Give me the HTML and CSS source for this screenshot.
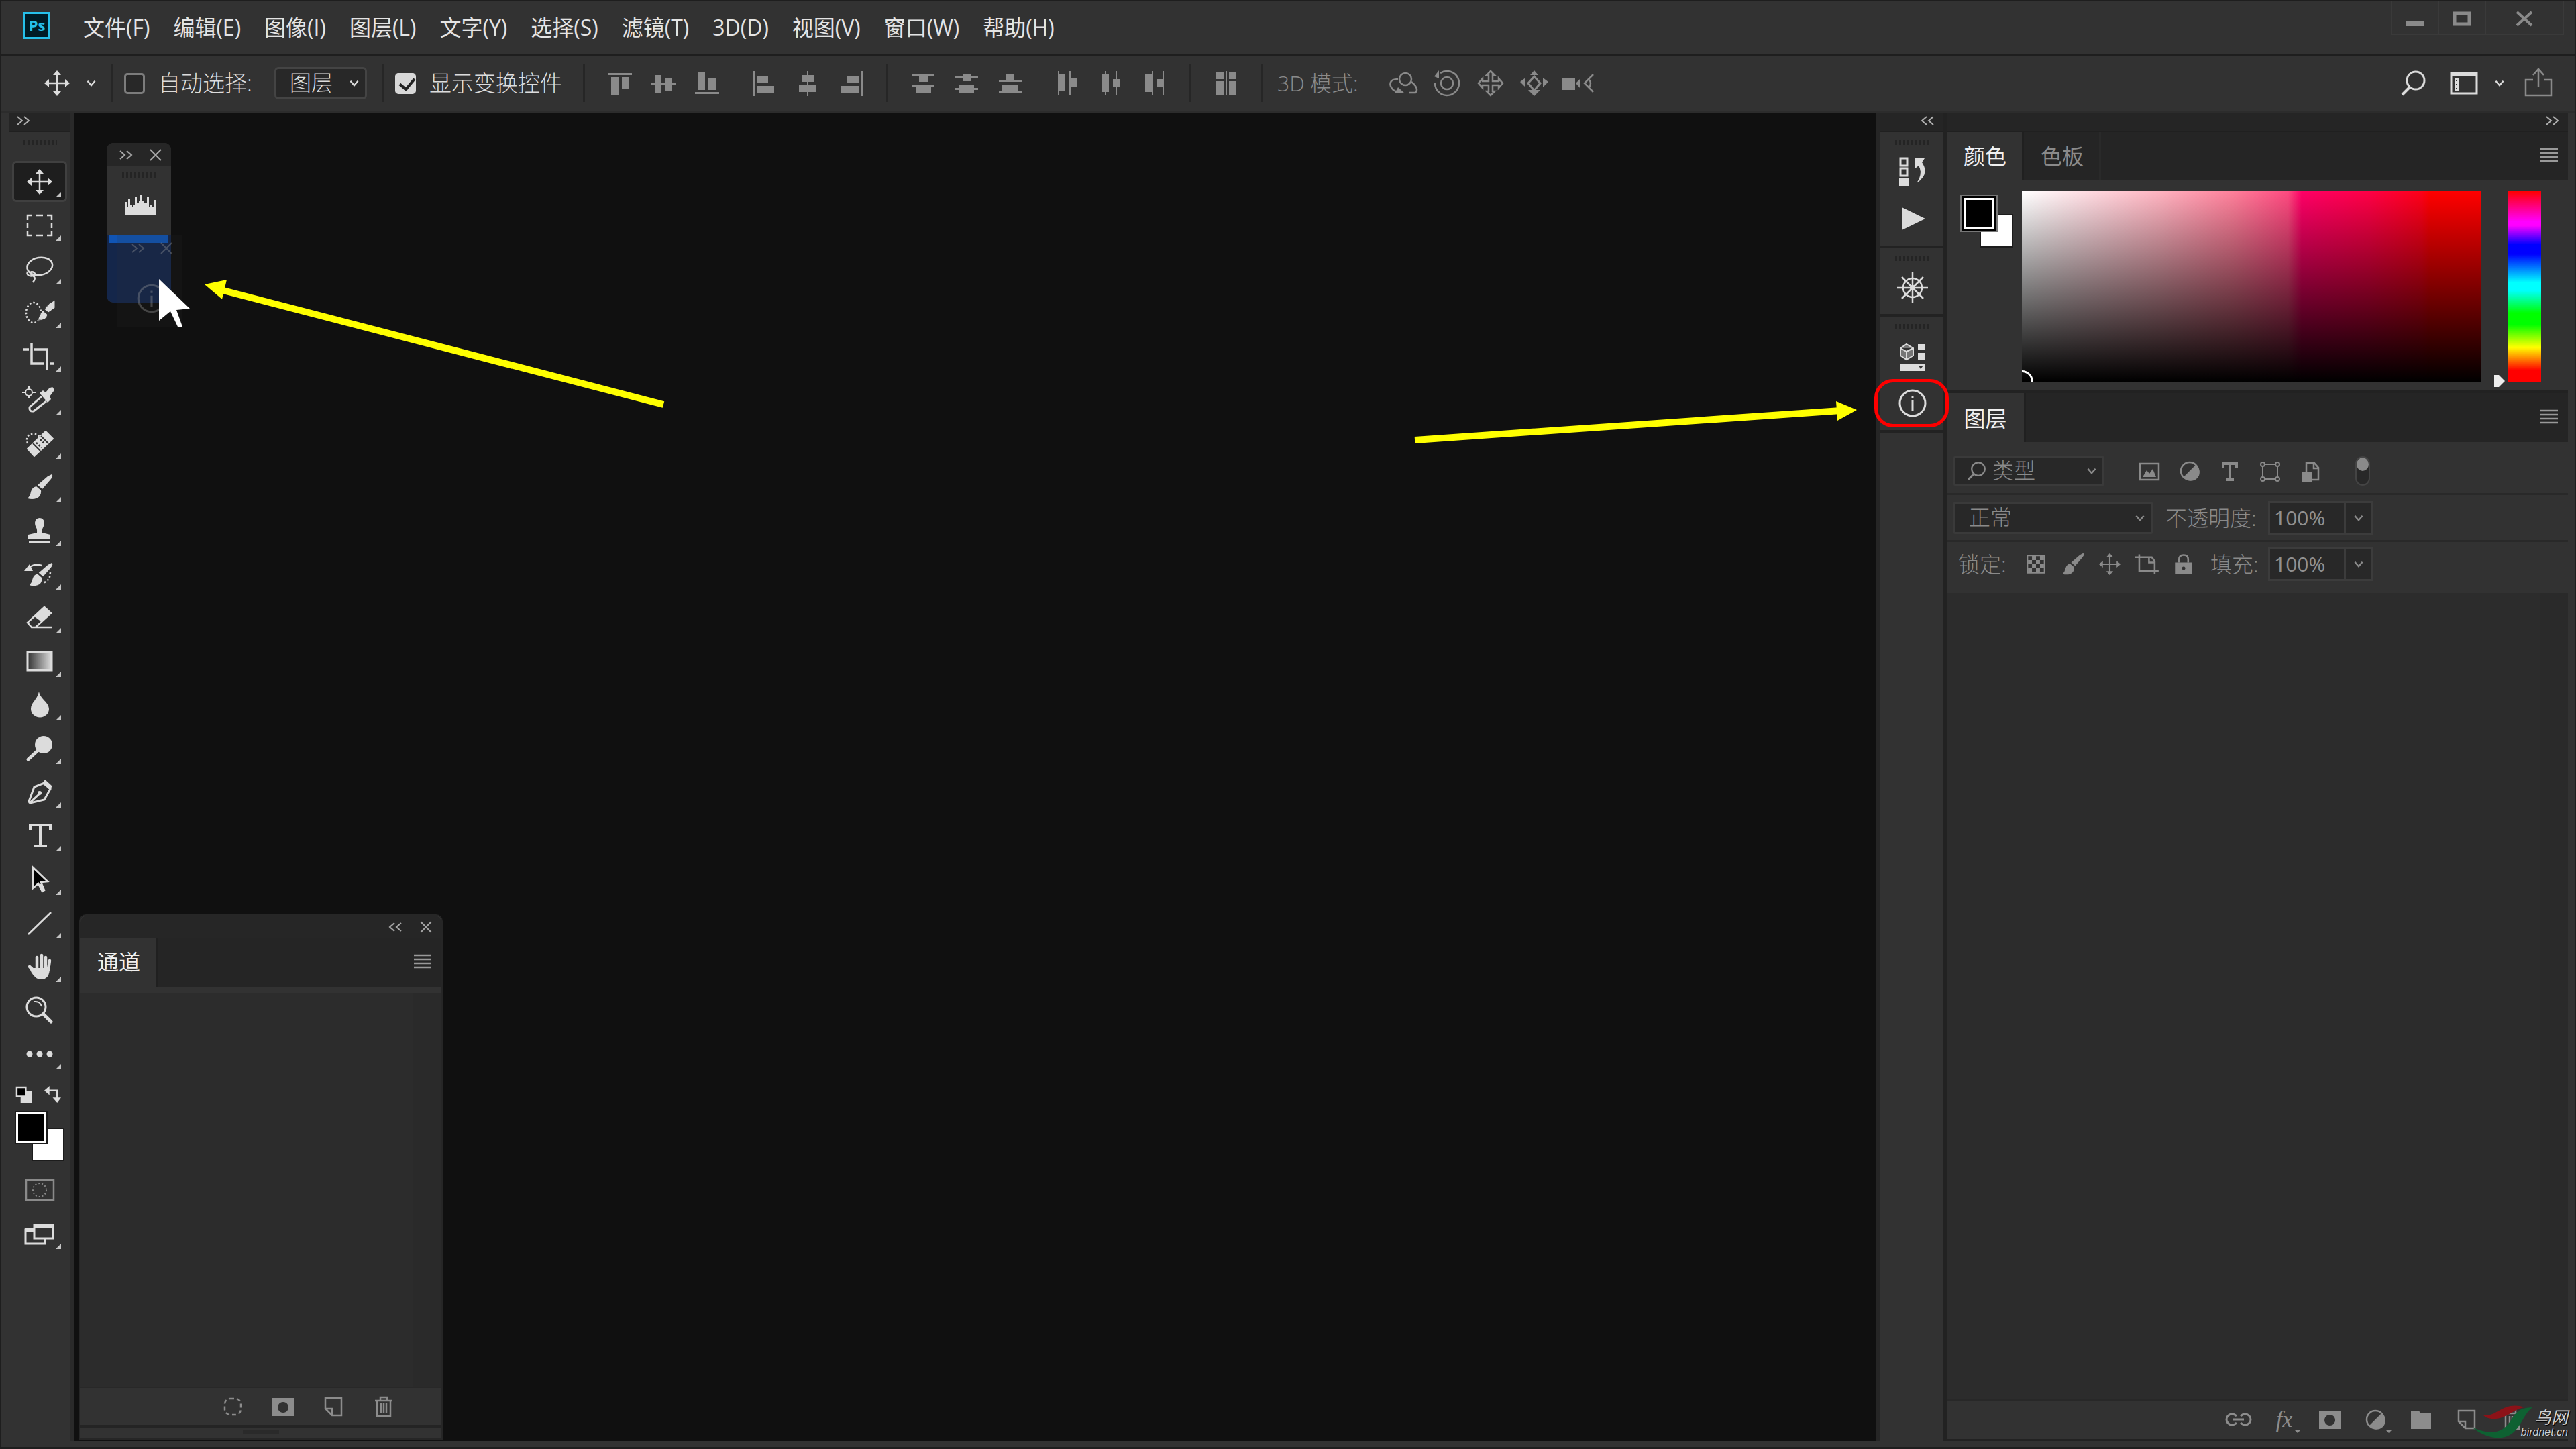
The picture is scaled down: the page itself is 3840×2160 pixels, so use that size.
FILE: index.html
```html
<!DOCTYPE html>
<html lang="zh-CN">
<head>
    <meta charset="UTF-8">
    <meta name="viewport" content="width=device-width, initial-scale=1.0">
    <title>Photoshop</title>
    <link rel="stylesheet" href="styles.css">
</head>
<body>
    <!-- shared icons, all centred on 0,0 -->
    <svg class="defs" aria-hidden="true">
        <defs>
            <linearGradient id="ramp"><stop offset="0" stop-color="#333"/><stop offset="1" stop-color="#ddd"/></linearGradient>
        </defs>
        <symbol id="move" viewBox="-20 -20 40 40"><path d="M-13 0H13M0-13V13" stroke="currentColor" stroke-width="2.5"/><path d="M-19 0l7-6v12zM19 0l-7-6v12zM0-19l-6 7h12zM0 19l-6-7h12z" fill="currentColor"/></symbol>
        <symbol id="chev" viewBox="-20 -20 40 40"><path d="M-7-4L0 4 7-4" fill="none" stroke="currentColor" stroke-width="3"/></symbol>
        <symbol id="right2" viewBox="-20 -20 40 40"><path d="M-9-6l7 6-7 6M1-6l7 6-7 6" fill="none" stroke="currentColor" stroke-width="2"/></symbol>
        <symbol id="left2" viewBox="-20 -20 40 40"><path d="M-2-6l-7 6 7 6M8-6l-7 6 7 6" fill="none" stroke="currentColor" stroke-width="2"/></symbol>
        <symbol id="cross" viewBox="-20 -20 40 40"><path d="M-8-8L8 8M8-8L-8 8" fill="none" stroke="currentColor" stroke-width="2"/></symbol>
        <symbol id="lines" viewBox="-20 -20 40 40"><path d="M-13-9H13M-13-3H13M-13 3H13M-13 9H13" stroke="currentColor" stroke-width="2.5"/></symbol>
        <symbol id="info" viewBox="-24 -24 48 48"><circle r="19" fill="none" stroke="currentColor" stroke-width="3"/><path d="M0-4V12M0-11V-8" stroke="currentColor" stroke-width="3"/></symbol>
        <symbol id="glass" viewBox="-20 -20 40 40"><circle cx="4" cy="-4" r="13" fill="none" stroke="currentColor" stroke-width="3"/><path d="M-5 6L-16 17" stroke="currentColor" stroke-width="4"/></symbol>
        <symbol id="mask" viewBox="-20 -20 40 40"><path d="M-16-13H16V14H-16ZM0-7a8 8 0 1 0 .1 0Z" fill="currentColor" fill-rule="evenodd"/></symbol>
        <symbol id="adjust" viewBox="-20 -20 40 40"><circle r="13" fill="none" stroke="currentColor" stroke-width="2.5"/><path d="M9-9A13 13 0 1 1-9 9Z" fill="currentColor"/></symbol>
        <symbol id="newdoc" viewBox="-20 -20 40 40"><path d="M-12-13H12V13H-2L-12 3ZM-12 3H-2V13" fill="none" stroke="currentColor" stroke-width="2.5"/></symbol>
        <symbol id="trash" viewBox="-20 -20 40 40"><path d="M-13-9H13M-5-10V-14H5V-10M-10-8V14H10V-8M-4-5V10M0-5V10M4-5V10" fill="none" stroke="currentColor" stroke-width="2.5"/></symbol>
        <symbol id="brush" viewBox="-20 -20 40 40"><path d="M18-19Q21-17 17-12L4 3-3-3 12-16ZM-5-1L2 5Q3 14-5 17-11 19-18 17-14 13-13 7-11 0-5-1Z" fill="currentColor"/></symbol>
    </svg>

    <div class="app">
        <header class="titlebar">
            <span class="logo">Ps</span>
            <nav class="menu">
                <a href="#">文件(F)</a>
                <a href="#">编辑(E)</a>
                <a href="#">图像(I)</a>
                <a href="#">图层(L)</a>
                <a href="#">文字(Y)</a>
                <a href="#">选择(S)</a>
                <a href="#">滤镜(T)</a>
                <a href="#">3D(D)</a>
                <a href="#">视图(V)</a>
                <a href="#">窗口(W)</a>
                <a href="#">帮助(H)</a>
            </nav>
            <div class="window-buttons">
                <button aria-label="最小化"><svg viewBox="-20 -20 40 40"><path d="M-13 6H13V13H-13Z" fill="currentColor"/></svg></button>
                <button aria-label="最大化"><svg viewBox="-20 -20 40 40"><path d="M-11-6H11V10H-11Z" fill="none" stroke="currentColor" stroke-width="5"/></svg></button>
                <button class="close" aria-label="关闭"><svg viewBox="-20 -20 40 40"><path d="M-11-8L11 12M11-8L-11 12" stroke="currentColor" stroke-width="4"/></svg></button>
            </div>
        </header>

        <div class="options">
            <button class="current" aria-label="移动工具"><svg><use href="#move"/></svg><svg class="small"><use href="#chev"/></svg></button>
            <span class="sep"></span>
            <label class="check"><input type="checkbox">自动选择:</label>
            <div class="select mode">
                <select aria-label="自动选择"><option>图层</option></select>
                <svg><use href="#chev"/></svg>
            </div>
            <span class="sep"></span>
            <label class="check"><input type="checkbox" checked>显示变换控件</label>
            <span class="sep"></span>
            <div class="group">
                <button aria-label="顶对齐"><svg viewBox="-20 -20 40 40"><path d="M-18-15H18V-12H-18ZM-13-9H-2V17H-13ZM3-9H13V8H3Z"/></svg></button>
                <button aria-label="垂直居中对齐"><svg viewBox="-20 -20 40 40"><path d="M-18 0H18V3H-18ZM-13-12H-3V15H-13ZM3-8H13V11H3Z"/></svg></button>
                <button aria-label="底对齐"><svg viewBox="-20 -20 40 40"><path d="M-18 13H18V16H-18ZM-13-16H-3V10H-13ZM2-7H13V10H2Z"/></svg></button>
            </div>
            <div class="group">
                <button aria-label="左对齐"><svg viewBox="-20 -20 40 40"><path d="M-17-18H-14V19H-17ZM-11-11H6V-1H-11ZM-11 4H15V15H-11Z"/></svg></button>
                <button aria-label="水平居中对齐"><svg viewBox="-20 -20 40 40"><path d="M-1-18H1V19H-1ZM-9-12H9V-2H-9ZM-13 3H13V13H-13Z"/></svg></button>
                <button aria-label="右对齐"><svg viewBox="-20 -20 40 40"><path d="M14-18H17V19H14ZM-6-11H11V-1H-6ZM-15 4H11V15H-15Z"/></svg></button>
            </div>
            <span class="sep"></span>
            <div class="group">
                <button aria-label="按顶分布"><svg viewBox="-20 -20 40 40"><path d="M-17-14H17V-11H-17ZM-6-11H7V-2H-6ZM-17 3H17V6H-17ZM-11 6H12V15H-11Z"/></svg></button>
                <button aria-label="垂直居中分布"><svg viewBox="-20 -20 40 40"><path d="M-17-10H17V-7H-17ZM-6-14H6V-3H-6ZM-17 7H17V10H-17ZM-11 3H11V14H-11Z"/></svg></button>
                <button aria-label="按底分布"><svg viewBox="-20 -20 40 40"><path d="M-17-5H17V-2H-17ZM-6-14H6V-5H-6ZM-17 12H17V15H-17ZM-12 3H11V12H-12Z"/></svg></button>
            </div>
            <div class="group">
                <button aria-label="按左分布"><svg viewBox="-20 -20 40 40"><path d="M-14-18H-12V18H-14ZM-12-13H-3V11H-12ZM3-18H5V18H3ZM5-8H14V6H5Z"/></svg></button>
                <button aria-label="水平居中分布"><svg viewBox="-20 -20 40 40"><path d="M-9-18H-7V18H-9ZM-13-13H-3V13H-13ZM7-18H9V18H7ZM3-6H13V6H3Z"/></svg></button>
                <button aria-label="按右分布"><svg viewBox="-20 -20 40 40"><path d="M-4-18H-2V18H-4ZM-14-13H-4V13H-14ZM12-18H14V18H12ZM3-6H12V6H3Z"/></svg></button>
            </div>
            <span class="sep"></span>
            <div class="group">
                <button aria-label="自动对齐图层"><svg viewBox="-20 -20 40 40"><path d="M-15-17H-4V-6H-15ZM-15-3H-4V18H-15ZM-1-18H1V18H-1ZM4-17H15V-6H4ZM4-3H15V18H4Z"/></svg></button>
            </div>
            <span class="sep"></span>
            <span class="dim">3D 模式:</span>
            <div class="group">
                <button aria-label="旋转"><svg viewBox="-20 -20 40 40"><g fill="none" stroke="currentColor" stroke-width="2.5"><circle cx="3" cy="-6" r="9"/><path d="M-8-6C-22-6-22 3-15 10L-8 14M12-2Q24 8 18 14H8"/></g><path d="M-8 6L2 15H-13Z"/></svg></button>
                <button aria-label="滚动"><svg viewBox="-20 -20 40 40"><g fill="none" stroke="currentColor" stroke-width="2.5"><circle r="9"/><path d="M-10-15A18 18 0 1 1-18 0"/></g><path d="M-12-19V-7L-19-10Z"/></svg></button>
                <button aria-label="拖动"><svg viewBox="-20 -20 40 40"><path d="M0-18L6-12H3V-3H12V-7L18 0 12 7V3H3V12H6L0 18-6 12H-3V3H-12V7L-18 0-12-7V-3H-3V-12H-6Z" fill="none" stroke="currentColor" stroke-width="2.5"/></svg></button>
                <button aria-label="滑动"><svg viewBox="-20 -20 40 40"><path d="M0-10L9 0 0 11-9 0Z" fill="none" stroke="currentColor" stroke-width="3"/><path d="M0-19L6-12H-6ZM-21-2L-13-8V6ZM21-2L13-8V6ZM-9 10H9L0 19Z"/></svg></button>
                <button aria-label="缩放"><svg viewBox="-20 -20 40 40"><path d="M-23-8H-4V10H-23ZM-3 0L4-7V8Z"/><path d="M23-13L10 0 23 13M17-5Q21 0 17 6" fill="none" stroke="currentColor" stroke-width="2.5"/></svg></button>
            </div>
            <div class="options-right">
                <button aria-label="搜索"><svg><use href="#glass"/></svg></button>
                <button class="workspace-btn" aria-label="工作区"><svg viewBox="-20 -20 40 40"><path d="M-19-15H19V15H-19Z" fill="none" stroke="currentColor" stroke-width="3"/><path d="M-19-16H19V-10H-19Z"/><path d="M-13-6H-9V-2H-13ZM-13 0H-9V4H-13ZM-13 6H-9V10H-13Z" fill="none" stroke="currentColor" stroke-width="2"/></svg><svg class="small"><use href="#chev"/></svg></button>
                <button class="dim" aria-label="共享"><svg viewBox="-20 -20 40 40"><path d="M-8-5H-19V18H19V-5H8M0 6V-20M-8-12L0-21 8-12" fill="none" stroke="currentColor" stroke-width="2.5"/></svg></button>
            </div>
        </div>

        <main class="workspace">
            <aside class="tools">
                <div class="dock-head"><svg><use href="#right2"/></svg></div>
                <div class="grip"></div>
                <button class="tool active" aria-label="移动"><svg><use href="#move"/></svg></button>
                <button class="tool" aria-label="矩形选框"><svg viewBox="-20 -20 40 40"><path d="M-18-8V-15H-11M-5-15H5M11-15H18V-8M18-4V4M18 8V15H11M5 15H-5M-11 15H-18V8M-18 4V-4" fill="none" stroke="currentColor" stroke-width="2.5"/></svg></button>
                <button class="tool" aria-label="套索"><svg viewBox="-20 -20 40 40"><g fill="none" stroke="currentColor" stroke-width="2.5"><ellipse cx="1" cy="-4" rx="19" ry="13" transform="rotate(-10)"/><path d="M-18 4C-21 12-8 12-7 7-9 3-17 3-12 9-5 12-7 16-10 20"/></g></svg></button>
                <button class="tool" aria-label="快速选择"><svg viewBox="-20 -20 40 40"><ellipse cx="-9" cy="0" rx="11" ry="15" fill="none" stroke="currentColor" stroke-width="2.5" stroke-dasharray="2.5 3"/><path d="M23-19V-7L13 0 7-5Q14-15 23-19ZM5-3L12 3Q10 13-3 11 2-1 5-3Z" stroke="#323232"/></svg></button>
                <button class="tool" aria-label="裁剪"><svg viewBox="-20 -20 40 40"><path d="M-24-10H-16M-12-19V11H6M-8-10H11V20M15 11H22" fill="none" stroke="currentColor" stroke-width="3.5"/></svg></button>
                <button class="tool" aria-label="吸管"><svg viewBox="-20 -20 40 40"><path d="M-16-20V-15M-16-7V-2M-26-11H-20M-12-11H-6" stroke="currentColor" stroke-width="2"/><circle cx="-16" cy="-11" r="5" fill="none" stroke="currentColor" stroke-width="2"/><path d="M3-5L-15 11Q-16 18-9 17L10 2" fill="none" stroke="currentColor" stroke-width="3"/><path d="M0-10L5-14 9-11 14-17Q22-22 21-13L15-5 17-1 12 4Z"/></svg></button>
                <button class="tool" aria-label="修复画笔"><svg viewBox="-20 -20 40 40"><path d="M-18 0Q-22-14-9-14-2-14 0-9" fill="none" stroke="currentColor" stroke-width="2.5" stroke-dasharray="2.5 3"/><path d="M9-18L20-7-8 19-18 8Z" stroke="currentColor" stroke-width="2" stroke-linejoin="round"/><path d="M2-11L13 0M-10 0L1 11" stroke="#323232" stroke-width="2"/><path d="M1-6L8 1M-5-1L3 6" stroke="#323232" stroke-width="2.5" stroke-dasharray="2.5 2.5"/></svg></button>
                <button class="tool" aria-label="画笔"><svg><use href="#brush"/></svg></button>
                <button class="tool" aria-label="仿制图章"><svg viewBox="-20 -20 40 40"><path d="M-7-12A7 7 0 1 1 7-12C7-5 3-5 4 3L16 6V12H-17V6L-4 3C-3-5-7-5-7-12ZM-16 15H16V18H-16Z"/></svg></button>
                <button class="tool" aria-label="历史记录画笔"><svg viewBox="-20 -20 40 40"><use href="#brush" x="-17" y="-18" width="37" height="37"/><path d="M-17-9Q-8-17 3-13" fill="none" stroke="currentColor" stroke-width="2.5"/><path d="M-15-15L-23-5H-10Z"/><path d="M16-3L15 4 12 9 6 13" fill="none" stroke="currentColor" stroke-width="2.5" stroke-dasharray="2.5 3"/></svg></button>
                <button class="tool" aria-label="橡皮擦"><svg viewBox="-20 -20 40 40"><path d="M7-16L17-7-6 14H-12L-18 7ZM-8 14H19" fill="none" stroke="currentColor" stroke-width="2.5"/><path d="M7-16L17-7 3 6-8-2Z"/></svg></button>
                <button class="tool" aria-label="渐变"><svg viewBox="-20 -20 40 40"><path d="M-18-14H18V13H-18Z" fill="url(#ramp)" stroke="currentColor" stroke-width="3"/></svg></button>
                <button class="tool" aria-label="模糊"><svg viewBox="-20 -20 40 40"><path d="M-1-20C1-9 14-4 14 6A13 12 0 0 1-13 6C-13-4-4-7-1-20Z"/></svg></button>
                <button class="tool" aria-label="减淡"><svg viewBox="-20 -20 40 40"><circle cx="6" cy="-6" r="13"/><path d="M-3 3L-17 16" stroke="currentColor" stroke-width="5" stroke-linecap="round"/></svg></button>
                <button class="tool" aria-label="钢笔"><svg viewBox="-20 -20 40 40"><path d="M7-14L16-5 7 11-14 16Q-17 15-15 11L-8-8ZM-14 15L0 2" fill="none" stroke="currentColor" stroke-width="3"/><circle cx="0" cy="1" r="3"/><path d="M8-19L19-9 15-4 4-13Z"/></svg></button>
                <button class="tool" aria-label="文字"><svg viewBox="-20 -20 40 40"><path d="M-14-8V-16H16V-8M1-16V16M-9 15H11" fill="none" stroke="currentColor" stroke-width="4"/></svg></button>
                <button class="tool" aria-label="路径选择"><svg viewBox="-20 -20 40 40"><path d="M-10-18L12 3 2 4 7 16 4 18-2 6-10 13Z" fill="#000" stroke="currentColor" stroke-width="2.5"/><path d="M1 7L6 17" stroke="currentColor" stroke-width="4"/></svg></button>
                <button class="tool" aria-label="直线"><svg viewBox="-20 -20 40 40"><path d="M-17 17L17-16" stroke="currentColor" stroke-width="2.5"/></svg></button>
                <button class="tool" aria-label="抓手"><svg viewBox="-20 -20 40 40"><path d="M-15 0L0 14M-4-14V4M3-17V4M9-14V4M15-9L13 5" stroke="currentColor" stroke-width="4.5" stroke-linecap="round"/><path d="M-8 2H15Q15 19 2 19-6 19-12 9L-15 3Z"/></svg></button>
                <button class="tool plain" aria-label="缩放"><svg viewBox="-20 -20 40 40"><circle cx="-5" cy="-5" r="14" fill="none" stroke="currentColor" stroke-width="3"/><path d="M6 6L17 17" stroke="currentColor" stroke-width="5" stroke-linecap="round"/><path d="M-8-13Q1-14 3-6" fill="none" stroke="currentColor" stroke-width="2"/></svg></button>
                <button class="tool" aria-label="编辑工具栏"><svg viewBox="-20 -20 40 40"><circle cx="-15" r="4.5"/><circle r="4.5"/><circle cx="15" r="4.5"/></svg></button>
                <div class="swatch-actions">
                    <button aria-label="默认颜色"><svg viewBox="0 0 26 26"><path d="M8 8H26V26H8Z"/><path d="M2 2H16V16H2Z" fill="#000" stroke="currentColor" stroke-width="2.5"/></svg></button>
                    <button aria-label="切换颜色"><svg viewBox="0 0 26 26"><path d="M6 7H20V20" fill="none" stroke="currentColor" stroke-width="2.5"/><path d="M0 7L8 0V14ZM20 26L13 18H26Z"/></svg></button>
                </div>
                <div class="swatches"><span class="bg"></span><span class="fg"></span></div>
                <button class="tool plain" aria-label="快速蒙版"><svg class="dim" viewBox="-20 -20 40 40"><path d="M-20-15H21V15H-20Z" fill="none" stroke="currentColor" stroke-width="2.5"/><circle r="10" fill="none" stroke="currentColor" stroke-width="2" stroke-dasharray="2 3"/></svg></button>
                <button class="tool" aria-label="屏幕模式"><svg viewBox="-20 -20 40 40"><path d="M-9-6H-21V15H8V8M-8-13H20V7H-8Z" fill="none" stroke="currentColor" stroke-width="3"/><path d="M-9-15H21V-9H-9ZM-21-8H-9V-3H-21Z"/></svg></button>
            </aside>

            <section class="canvas">
                <svg class="arrow arrow-left" viewBox="0 0 700 200"><path d="M20 16L684 188" stroke="#ff0" stroke-width="10"/><path d="M0 9L33 2 26 31Z" fill="#ff0"/></svg>
                <svg class="arrow arrow-right" viewBox="0 0 660 70"><path d="M0 58L635 14" stroke="#ff0" stroke-width="10"/><path d="M659 13L628 0 630 29Z" fill="#ff0"/></svg>

                <div class="float">
                    <div class="float-head"><svg><use href="#right2"/></svg><svg><use href="#cross"/></svg></div>
                    <div class="grip"></div>
                    <button class="histogram" aria-label="直方图"><svg viewBox="0 0 46 30"><path d="M0 30V11H3V18H5V6H8V16H11V18H13V15H15V3H18V13H21V9H23V0H26V9H28V13H31V12H33V3H36V18H38V15H40V18H43V8H46V30Z"/></svg></button>
                    <div class="drop"></div>
                    <div class="ghost">
                        <div class="ghost-head"><svg><use href="#right2"/></svg><svg><use href="#cross"/></svg></div>
                        <svg class="ghost-info"><use href="#info"/></svg>
                    </div>
                    <svg class="cursor" viewBox="0 0 46 72"><path d="M0 0L46 44 26 46 35 71H28L17 48 0 62Z" fill="#fff"/></svg>
                </div>

                <section class="channels">
                    <div class="float-head"><svg><use href="#left2"/></svg><svg><use href="#cross"/></svg></div>
                    <div class="tabs"><button class="tab on">通道</button><svg class="panel-menu"><use href="#lines"/></svg></div>
                    <div class="list"></div>
                    <div class="foot">
                        <button aria-label="载入选区"><svg viewBox="-20 -20 40 40"><rect x="-12" y="-12" width="24" height="24" rx="8" fill="none" stroke="currentColor" stroke-width="2.5" stroke-dasharray="6 4"/></svg></button>
                        <button aria-label="存储蒙版"><svg><use href="#mask"/></svg></button>
                        <button aria-label="新建通道"><svg><use href="#newdoc"/></svg></button>
                        <button aria-label="删除"><svg><use href="#trash"/></svg></button>
                    </div>
                    <div class="resize"></div>
                </section>
            </section>

            <aside class="dock">
                <div class="dock-head end"><svg><use href="#left2"/></svg></div>
                <div class="dock-group tall">
                    <div class="grip"></div>
                    <button aria-label="历史记录"><svg viewBox="-24 -24 48 48"><path d="M-18-20H-8V-9H-18ZM-18-5H-8V6H-18Z" fill="none" stroke="currentColor" stroke-width="3"/><path d="M-20 9H-6V22H-20ZM3-20H18L14-14Q26 4 6 17 16 2 9-9L4-5Z"/></svg></button>
                    <button aria-label="动作"><svg viewBox="-24 -24 48 48"><path d="M-16-17L19 0-16 17Z"/></svg></button>
                </div>
                <div class="dock-group">
                    <div class="grip"></div>
                    <button aria-label="导航器"><svg viewBox="-24 -24 48 48"><g fill="none" stroke="currentColor" stroke-width="2.5"><circle r="14"/><path d="M0-23V23M-23 0H23M-16-16L16 16M16-16L-16 16"/></g><circle r="4"/></svg></button>
                </div>
                <div class="dock-group tall">
                    <div class="grip"></div>
                    <button aria-label="属性"><svg viewBox="-24 -24 48 48"><path d="M-9-18L1-12V-1L-9 5-18-1V-12ZM-18-12L-9-7 1-12M-9-7V5" fill="#777" stroke="currentColor" stroke-width="2"/><path d="M8-18H18V-9H8ZM8-5H18V5H8ZM-19 12H19V22H-19Z"/><path d="M9 14H16L12 19Z" fill="#333"/></svg></button>
                    <button class="marked" aria-label="信息"><svg><use href="#info"/></svg></button>
                </div>
            </aside>

            <aside class="panels">
                <div class="dock-head end"><svg><use href="#right2"/></svg></div>
                <div class="tabs"><button class="tab on">颜色</button><button class="tab">色板</button><svg class="panel-menu"><use href="#lines"/></svg></div>
                <div class="color">
                    <div class="color-swatches"><span class="bg"></span><span class="fg"></span></div>
                    <div class="field"><span class="picker"></span></div>
                    <svg class="hue-arrow" viewBox="0 0 18 20"><path d="M1 1H8L17 10 8 19H1Z" fill="#eee"/></svg>
                    <div class="hue"></div>
                </div>
                <div class="tabs layers-tabs"><button class="tab on">图层</button><svg class="panel-menu"><use href="#lines"/></svg></div>
                <div class="row filter">
                    <div class="select kind">
                        <svg class="lead"><use href="#glass"/></svg>
                        <select aria-label="类型"><option>类型</option></select>
                        <svg><use href="#chev"/></svg>
                    </div>
                    <div class="filters">
                        <button aria-label="像素图层"><svg viewBox="-20 -20 40 40"><path d="M-14-11H14V13H-14Z" fill="none" stroke="currentColor" stroke-width="2.5"/><path d="M-10 9L-4-1 0 4 5-3 10 9Z"/></svg></button>
                        <button aria-label="调整图层"><svg><use href="#adjust"/></svg></button>
                        <button aria-label="文字图层"><svg viewBox="-20 -20 40 40"><path d="M-10-5V-11H10V-5M0-12V13M-6 13H6" fill="none" stroke="currentColor" stroke-width="4"/></svg></button>
                        <button aria-label="形状图层"><svg viewBox="-20 -20 40 40"><path d="M-11-10H11V12H-11Z" fill="none" stroke="currentColor" stroke-width="2"/><g fill="#323232" stroke="currentColor" stroke-width="2"><circle cx="-11" cy="-10" r="3"/><circle cx="11" cy="-10" r="3"/><circle cx="-11" cy="12" r="3"/><circle cx="11" cy="12" r="3"/></g></svg></button>
                        <button aria-label="智能对象"><svg viewBox="-20 -20 40 40"><path d="M-6 1V-12H6L12-5V13H3M5-12V-4H12" fill="none" stroke="currentColor" stroke-width="2.5"/><path d="M-13 2H2V16H-13Z"/></svg></button>
                    </div>
                    <button class="toggle" aria-label="过滤开关"></button>
                </div>
                <div class="row blend">
                    <div class="select blend-mode">
                        <select aria-label="混合模式"><option>正常</option></select>
                        <svg><use href="#chev"/></svg>
                    </div>
                    <label for="opacity">不透明度:</label>
                    <div class="value"><input id="opacity" type="text" value="100%"><button aria-label="不透明度滑块"><svg><use href="#chev"/></svg></button></div>
                </div>
                <div class="row lock">
                    <span>锁定:</span>
                    <div class="locks">
                        <button aria-label="锁定透明像素"><svg viewBox="-20 -20 40 40"><path d="M-15-15H15V15H-15Z" fill="none" stroke="currentColor" stroke-width="2.5"/><path d="M-7-15H0V-7H-7ZM7-15H14V-7H7ZM-14-7H-7V0H-14ZM0-7H7V0H0ZM-7 0H0V7H-7ZM7 0H14V7H7ZM-14 7H-7V15H-14ZM0 7H7V15H0Z"/></svg></button>
                        <button aria-label="锁定图像像素"><svg><use href="#brush"/></svg></button>
                        <button aria-label="锁定位置"><svg><use href="#move"/></svg></button>
                        <button aria-label="防止自动嵌套"><svg viewBox="-20 -20 40 40"><path d="M-21-12H9L14-5V17M-13-17V12H21M4-12V-3H14" fill="none" stroke="currentColor" stroke-width="3"/></svg></button>
                        <button aria-label="锁定全部"><svg viewBox="-20 -20 40 40"><path d="M-8-3V-8Q-8-16 0-16T8-8V-3" fill="none" stroke="currentColor" stroke-width="3"/><path d="M-15-3H15V17H-15ZM0 4a3 3 0 1 0 .1 0Z" fill-rule="evenodd"/></svg></button>
                    </div>
                    <label for="fill">填充:</label>
                    <div class="value"><input id="fill" type="text" value="100%"><button aria-label="填充滑块"><svg><use href="#chev"/></svg></button></div>
                </div>
                <div class="list"></div>
                <div class="foot">
                    <button aria-label="链接图层"><svg viewBox="-20 -20 40 40"><path d="M-3-5Q-6-8-10-8A8 8 0 0 0-10 8Q-6 8-3 5M3-5Q6-8 10-8A8 8 0 0 1 10 8Q6 8 3 5M-8 0H8" fill="none" stroke="currentColor" stroke-width="3"/></svg></button>
                    <button class="fx" aria-label="图层样式">fx</button>
                    <button aria-label="图层蒙版"><svg><use href="#mask"/></svg></button>
                    <button class="more" aria-label="调整图层"><svg><use href="#adjust"/></svg></button>
                    <button aria-label="新建组"><svg viewBox="-20 -20 40 40"><path d="M-15-13H-3L-1-9H15V14H-15Z"/></svg></button>
                    <button aria-label="新建图层"><svg><use href="#newdoc"/></svg></button>
                    <button aria-label="删除图层"><svg><use href="#trash"/></svg></button>
                </div>
                <div class="watermark">
                    <svg viewBox="0 0 92 52"><path d="M15 16C35 22 45-6 78 5 62 6 50 24 28 22 21 21 18 19 15 16Z" fill="#8c1218"/><path d="M0 35C25 45 43 46 57 24 66 9 73 6 89 5 78 13 73 30 63 40 46 58 18 50 0 35Z" fill="#0e6132"/></svg>
                    <div class="watermark-text"><span class="cn">鸟网</span><span class="url">birdnet.cn</span></div>
                </div>
            </aside>
        </main>
    </div>
</body>
</html>
```

FILE: styles.css
```css
* {
    box-sizing: border-box;
}

body {
    margin: 0;
    background: #101010;
    color: #dcdcdc;
    font-family: "Open Sans", "Noto Sans CJK SC", sans-serif;
    font-size: 32px;
    line-height: 40px;
}

button {
    display: flex;
    align-items: center;
    justify-content: center;
    padding: 0;
    border: none;
    background: none;
    color: inherit;
    font: inherit;
    cursor: pointer;
}

svg {
    width: 40px;
    height: 40px;
    flex: none;
    fill: currentColor;
    overflow: visible;
}

.defs {
    position: absolute;
    width: 0;
    height: 0;
}

.small { width: 32px; height: 32px; }
.dim { color: #8a8a8a; }

.app {
    display: flex;
    flex-direction: column;
    height: 100vh;
    border: 2px solid #1e1e1e;
    border-bottom-width: 3px;
    background: #323232;
}

/* title bar */
.titlebar {
    display: flex;
    align-items: center;
    height: 78px;
    padding: 0 16px 0 33px;
    flex: none;
}

.logo {
    width: 40px;
    height: 40px;
    margin-bottom: 6px;
    border: 3px solid #26c0ea;
    background: #001c26;
    color: #26c0ea;
    font-size: 22px;
    font-weight: bold;
    line-height: 32px;
    text-align: center;
}

.menu {
    display: flex;
    gap: 35px;
    margin-left: 49px;
}

.menu a {
    color: #e4e4e4;
    text-decoration: none;
}

.window-buttons {
    display: flex;
    align-self: flex-start;
    margin-left: auto;
    border: 2px solid #3a3a3a;
    border-top: none;
    color: #8a8a8a;
}

.window-buttons button {
    width: 70px;
    height: 48px;
    border-right: 2px solid #3a3a3a;
}

.window-buttons .close {
    width: 114px;
    border: none;
}

/* options bar */
.options {
    display: flex;
    align-items: center;
    height: 88px;
    padding-left: 63px;
    border-top: 3px solid #1e1e1e;
    border-bottom: 3px solid #2c2c2c;
    flex: none;
    white-space: nowrap;
}

.options .sep {
    width: 3px;
    height: 56px;
    background: #262626;
}

.current {
    gap: 15px;
    width: 100px;
    justify-content: flex-start;
}

.check {
    display: flex;
    align-items: center;
    gap: 20px;
    margin-left: 17px;
    font-size: 33px;
    font-weight: 300;
}

.check + .sep { margin-left: 31px; }

.check input {
    appearance: none;
    width: 31px;
    height: 31px;
    margin: 0;
    border: 3px solid #7c7c7c;
    border-radius: 5px;
    background: #282828;
}

.check input:checked {
    border-color: #d8d8d8;
    background: #d8d8d8;
}

.check input:checked::before {
    content: "";
    display: block;
    width: 10px;
    height: 18px;
    margin: 0 0 0 8px;
    border: solid #222;
    border-width: 0 4px 4px 0;
    transform: rotate(40deg);
}

.select {
    position: relative;
    display: flex;
    align-items: center;
    border: 3px solid #444;
    border-radius: 6px;
    background: #282828;
}

.select select {
    appearance: none;
    width: 100%;
    height: 42px;
    padding: 0 40px 2px 20px;
    border: none;
    background: none;
    color: inherit;
    font: inherit;
    font-weight: 300;
    line-height: 40px;
}

.select svg {
    position: absolute;
    right: 0;
    width: 32px;
    height: 32px;
    pointer-events: none;
}

.mode {
    width: 138px;
    margin: 0 22px 0 33px;
}

.group {
    display: flex;
    margin-left: 20px;
    color: #8a8a8a;
}

.group button { width: 65px; height: 60px; }
.group + .sep { margin-left: 19px; }
.sep + .dim { margin-left: 21px; }
.dim + .group { margin-left: 35px; }
.options > .dim { font-weight: 300; }

.options-right {
    display: flex;
    align-items: center;
    gap: 36px;
    margin-left: auto;
    padding-right: 34px;
}

.workspace-btn { gap: 17px; }
.options-right .dim { margin-left: -14px; }

/* workspace columns */
.workspace {
    display: flex;
    flex: 1;
    min-height: 0;
    padding: 0 10px 9px 12px;
}

.dock-head {
    display: flex;
    align-items: center;
    height: 29px;
    padding: 0 3px 3px 1px;
    background: #252525;
    border-bottom: 2px solid #202020;
    color: #b0b0b0;
    flex: none;
}

.dock-head.end { justify-content: flex-end; }

.grip {
    width: 50px;
    height: 8px;
    margin: 11px auto 0;
    background: repeating-linear-gradient(90deg, #242424 0 3px, #323232 3px 6px);
}

.tools {
    width: 96px;
    border-right: 5px solid #2a2a2a;
    flex: none;
}

.tool {
    position: relative;
    width: 82px;
    height: 61px;
    margin: 4px 0 0 4px;
    border: 3px solid transparent;
    border-radius: 6px;
}

.grip + .tool { margin-top: 24px; }

.tool.active {
    border-color: #404040;
    background: #1e1e1e;
}

/* corner mark: the tool has a fly-out */
.tool::after {
    content: "";
    position: absolute;
    right: 6px;
    bottom: 4px;
    border-left: 8px solid transparent;
    border-bottom: 8px solid #c4c4c4;
}

.tool.plain::after { display: none; }

.swatch-actions {
    display: flex;
    gap: 18px;
    margin: 18px 0 0 9px;
}

.swatch-actions svg { width: 25px; height: 25px; }

.swatches {
    position: relative;
    width: 70px;
    height: 71px;
    margin: 14px 0 14px 10px;
}

.swatches span {
    position: absolute;
    width: 45px;
    height: 46px;
    outline: 2px solid #1c1c1c;
}

.swatches .bg { right: 0; bottom: 0; background: #fff; }
.swatches .fg { left: 0; top: 0; background: #000; border: 3px solid #fff; }

.canvas {
    position: relative;
    flex: 1;
    background: #101010;
}

.arrow { position: absolute; }
.arrow-left { left: 195px; top: 247px; width: 700px; height: 200px; }
.arrow-right { right: 28px; top: 430px; width: 660px; height: 70px; }

/* floating histogram dock with a panel being dropped on it */
.float {
    position: absolute;
    left: 49px;
    top: 45px;
    width: 96px;
    height: 238px;
    border-radius: 10px;
    background: #323232;
}

.float-head {
    display: flex;
    align-items: center;
    justify-content: flex-end;
    height: 35px;
    padding-right: 3px;
    border-radius: 10px 10px 0 0;
    background: #262626;
    color: #a8a8a8;
}

.float .float-head { gap: 4px; }
.float .grip { margin-top: 9px; }

.histogram {
    width: 100px;
    height: 80px;
}

.histogram svg { width: 46px; height: 30px; }

.drop {
    position: absolute;
    top: 137px;
    left: 0;
    right: 0;
    bottom: 0;
    border-radius: 0 0 10px 10px;
    background: #14264a;
}

.drop::before {
    content: "";
    display: block;
    height: 12px;
    margin: 0 4px;
    background: #1054b4;
}

.ghost {
    position: absolute;
    left: 15px;
    top: 137px;
    width: 97px;
    height: 138px;
    background: rgba(50, 50, 50, 0.14);
    color: rgba(160, 160, 160, 0.35);
}

.ghost-head {
    display: flex;
    justify-content: flex-end;
    padding-right: 3px;
    gap: 2px;
}

.ghost-info {
    display: block;
    width: 50px;
    height: 50px;
    margin: 30px 0 0 27px;
}

.cursor {
    position: absolute;
    left: 78px;
    top: 203px;
    width: 46px;
    height: 72px;
}

/* channels panel */
.channels {
    position: absolute;
    left: 8px;
    bottom: 2px;
    display: flex;
    flex-direction: column;
    width: 542px;
    height: 783px;
    border: 2px solid #262626;
    border-radius: 10px 10px 0 0;
    background: #323232;
}

.channels .float-head { gap: 5px; height: 34px; }

.tabs {
    display: flex;
    height: 72px;
    background: #252525;
    flex: none;
}

.tab {
    width: 115px;
    padding-left: 2px;
    border-right: 3px solid #202020;
    color: #8a8a8a;
    font-size: 32px;
}

.tab:not(.on) {
    border-color: #2a2a2a;
}

.tab.on {
    background: #323232;
    color: #f0f0f0;
}

.panel-menu {
    align-self: center;
    margin: 0 8px 4px auto;
    color: #999;
}

.channels .tab { padding-bottom: 3px; }

/* empty list with its scroll track */
.list {
    flex: 1;
    margin-top: 9px;
    border-right: 42px solid #2a2a2a;
    background: #2c2c2c;
}

.foot {
    display: flex;
    align-items: center;
    height: 57px;
    color: #8c8c8c;
    flex: none;
}

.channels .foot {
    padding-left: 189px;
    border-top: 2px solid #282828;
}

.channels .foot button { width: 75px; }

.resize {
    height: 20px;
    border-top: 4px solid #242424;
}

.resize::before {
    content: "";
    display: block;
    width: 54px;
    height: 6px;
    margin: 4px auto;
    background: #2a2a2a;
}

/* icon dock */
.dock {
    width: 105px;
    border-left: 5px solid #262626;
    border-right: 5px solid #222;
    flex: none;
}

.dock-head.end { padding-right: 3px; }

.dock-group {
    height: 102px;
    padding-top: 11px;
    border-bottom: 4px solid #222;
}

.dock-group.tall { height: 173px; }

.dock-group button {
    position: relative;
    width: 98px;
    height: 70px;
}

.dock-group svg { width: 48px; height: 48px; }

.dock .grip { margin: 0 auto 5px; }

.marked::before {
    content: "";
    position: absolute;
    left: -8px;
    right: -5px;
    top: -1px;
    bottom: -1px;
    border: 5px solid #f00;
    border-radius: 28px;
    z-index: 2;
}

/* right panels */
.panels {
    position: relative;
    display: flex;
    flex-direction: column;
    width: 926px;
    flex: none;
}

.color {
    display: flex;
    align-items: flex-start;
    height: 312px;
    padding: 16px 40px 0 21px;
}

.color-swatches {
    position: relative;
    width: 76px;
    height: 76px;
    margin: 6px 15px 0 0;
}

.color-swatches span {
    position: absolute;
    width: 46px;
    height: 46px;
}

.color-swatches .bg { right: 0; bottom: 0; background: #fff; outline: 2px solid #1c1c1c; }

.color-swatches .fg {
    left: 4px;
    top: 4px;
    border: 3px solid #fff;
    background: #000;
    outline: 3px solid #000;
    box-shadow: 0 0 0 5px #777;
}

.field {
    position: relative;
    flex: 1;
    height: 284px;
    overflow: hidden;
    background: linear-gradient(transparent, #000), linear-gradient(90deg, #fff, #ffb3c0 30%, #ff7f9a 46%, #ff4a80 58%, #ff0066 61%, #ff0044 76%, #ff0018 87%, #f00 89%);
}

.picker {
    position: absolute;
    left: -17px;
    bottom: -17px;
    width: 34px;
    height: 34px;
    border: 3px solid #fff;
    border-radius: 50%;
}

.hue-arrow {
    width: 18px;
    height: 20px;
    margin: 273px 4px 0 19px;
}

.hue {
    width: 49px;
    height: 284px;
    background: linear-gradient(#f00, #f0f 16%, #f0f 18%, #00f 28%, #00f 33%, #0ff 48%, #0ff 52%, #0f0 64%, #0f0 70%, #ff0 82%, #f00 94%);
}

.layers-tabs {
    height: 78px;
    border-top: 5px solid #222;
}

.layers-tabs .tab { width: 118px; padding: 2px 0 0; }

.row {
    display: flex;
    align-items: center;
    height: 70px;
    padding-left: 10px;
    border-bottom: 3px solid #292929;
    color: #8a8a8a;
    font-weight: 300;
    flex: none;
}

.filter { height: 79px; padding-top: 10px; }
.lock { height: 72px; border-bottom: none; padding-bottom: 6px; }

.row .select {
    border-color: #3a3a3a;
    border-radius: 2px;
}

.kind { width: 225px; height: 44px; }
.kind select { padding-left: 55px; }
.select .lead { left: 16px; width: 30px; height: 30px; }

.filters {
    display: flex;
    margin-left: 37px;
}

.filters button { width: 60px; }

.toggle {
    width: 22px;
    height: 44px;
    align-items: flex-start;
    margin-left: 37px;
    border: 2px solid #444;
    border-radius: 11px;
    background: #282828;
}

.toggle::before {
    content: "";
    width: 20px;
    height: 20px;
    border-radius: 50%;
    background: #8a8a8a;
}

.blend-mode { width: 297px; }

.row label { width: 153px; margin-left: 19px; }
.lock label { width: 86px; margin-left: 12px; }

.value {
    display: flex;
    height: 50px;
    border: 3px solid #3c3c3c;
    background: #282828;
}

.value input {
    width: 113px;
    padding: 0 0 0 6px;
    border: none;
    border-right: 3px solid #3c3c3c;
    background: none;
    color: #909090;
    font: inherit;
    font-size: 30px;
    font-weight: 400;
}

.value button { width: 38px; }
.value svg { width: 32px; height: 32px; }

.lock > span { width: 95px; padding-left: 7px; }

.locks {
    display: flex;
    width: 276px;
}

.locks button { width: 55px; }
.locks svg { width: 34px; height: 34px; }

.panels .list { margin-top: 4px; }

.panels .foot {
    justify-content: flex-end;
    height: 62px;
    padding: 0 49px 2px 0;
    border-top: 3px solid #282828;
    border-bottom: 3px solid #222;
}

.panels .foot button {
    position: relative;
    width: 68px;
}

.panels .foot .fx {
    font-family: "Liberation Serif", serif;
    font-size: 34px;
    font-style: italic;
}

.fx::after,
.more::after {
    content: "";
    position: absolute;
    right: 9px;
    bottom: 0;
    border: 5px solid transparent;
    border-top-color: #8c8c8c;
    border-bottom: none;
}

.watermark {
    position: absolute;
    right: 0;
    bottom: 3px;
    display: flex;
    align-items: flex-end;
    color: #d0d0d0;
}

.watermark svg { width: 92px; height: 52px; margin-right: -20px; }

.watermark-text {
    display: flex;
    flex-direction: column;
    align-items: flex-end;
    font-style: italic;
    text-shadow: 1px 1px 1px #000;
    z-index: 1;
}

.watermark .cn { font-size: 25px; line-height: 26px; }
.watermark .url { font-family: "Liberation Sans", sans-serif; font-size: 16px; line-height: 20px; }
```
